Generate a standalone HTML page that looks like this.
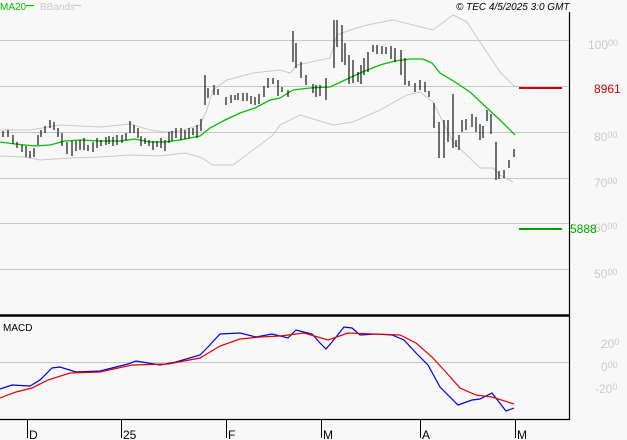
<!DOCTYPE html>
<html><head><meta charset="utf-8"><style>
html,body{margin:0;padding:0;background:#f8f8f8;}
svg{display:block;font-family:"Liberation Sans",sans-serif;}
</style></head><body>
<svg width="627" height="440" viewBox="0 0 627 440" xmlns="http://www.w3.org/2000/svg">
<rect width="627" height="440" fill="#f8f8f8"/>
<g stroke="#c8c8c8" stroke-width="1">
<path d="M0 40.5H569M0 86.5H569M0 132.5H569M0 178.5H569M0 223.5H569M0 269.5H569M0 362.5H569"/>
</g>
<g fill="none" stroke="#c8c8c8" stroke-width="1">
<path d="M0 130 L30 130 L60 125 L100 127 L130 124 L150 130 L165 132 L180 131 L200 125 L207 110 L213 90 L227 80 L253 73 L280 70 L290 73 L297 65 L330 58 L337 35 L350 30 L367 25 L393 20 L433 30 L453 15 L467 22 L480 42 L500 72 L513 85 L517 87"/>
<path d="M0 156 L25 157 L40 160 L70 158 L100 157 L130 155 L160 156 L185 153 L200 157 L213 165 L233 165 L253 150 L273 135 L280 125 L300 115 L333 125 L353 122 L380 110 L407 95 L420 92 L433 102 L453 142 L480 168 L493 168 L500 175 L513 182"/>
</g>
<path fill="none" stroke="#00c000" stroke-width="1.3" d="M0 142 L15 144 L35 146 L50 145 L65 141 L80 140 L100 141 L120 141 L135 139 L150 142 L165 142 L180 140 L200 136 L210 128 L225 120 L240 113 L255 108 L270 100 L280 98 L293 90 L310 88 L330 87 L345 80 L360 73 L380 65 L395 61 L410 59 L423 59 L432 63 L440 73 L455 82 L470 92 L487 108 L500 120 L515 135"/>
<path fill="none" stroke="#000" stroke-width="1.1" d="
M3 131V137M8 130V137M13 135V144M17 142V148M22 145V152M26 146V157M30 151V158M34 148V157M38 135V145M41 130V137M45 126V133M50 120V128M54 122V130M58 128V137M62 133V146M67 142V154M72 141V156M76 141V151M80 140V150M84 138V150M88 145V151M93 142V152M97 138V148M101 140V146M106 137V145M109 136V144M113 137V146M117 135V145M122 135V143M126 133V140M130 121V133M134 125V133M138 128V138M141 136V146M145 138V144M149 140V146M153 141V150M157 141V147M161 138V148M165 140V151M169 132V143M172 131V141M176 128V138M181 128V140M185 130V139M189 128V138M193 128V135M197 125V138M201 119V131M205 75V105M208 88V98M214 85V95M218 89V95M226 97V105M231 95V103M235 95V100M238 93V100M243 93V101M247 93V101M251 96V104M255 97V105M259 94V104M264 86V97M268 78V88M273 78V84M278 80V96M282 87V92M288 90V97M293 31V62M296 43V68M301 62V78M306 75V85M313 84V93M316 85V97M320 85V96M326 78V100M334 20V68M337 20V47M342 25V62M345 43V65M349 55V84M353 60V83M358 72V82M361 65V84M364 58V75M368 52V72M373 45V52M377 45V54M382 46V54M386 47V54M391 46V59M395 48V62M401 50V75M405 58V85M409 81V86M415 83V92M420 80V90M425 82V92M429 91V97M434 103V128M439 122V158M444 120V158M448 120V142M453 94V148M456 140V147M459 135V150M462 120V132M466 119V130M472 114V127M476 117V132M480 124V140M483 126V138M487 110V121M491 114V134M496 142V180M499 171V179M504 170V178M509 160V168M514 149V157"/>
<rect x="519" y="87" width="43" height="2" fill="#d00000"/>
<rect x="519" y="228" width="43" height="2" fill="#00a000"/>
<path d="M569.5 12V420M0 419.5H570" stroke="#000" stroke-width="1.2" fill="none"/>
<path d="M0 315.5H570" stroke="#000" stroke-width="2.5"/>
<path d="M27.5 420V438M121.5 420V438M226.5 420V438M321.5 420V438M420.5 420V438M515.5 420V438" stroke="#000" stroke-width="1"/>
<g font-size="12" fill="#000">
<text x="29" y="439">D</text><text x="123" y="439">25</text><text x="228" y="439">F</text><text x="323" y="439">M</text><text x="422" y="439">A</text><text x="517" y="439">M</text>
</g>
<text x="3" y="331" font-size="10" fill="#000">MACD</text>
<path fill="none" stroke="#0000e0" stroke-width="1.2" d="M0 389 L12 385 L30 386 L40 380 L52 368 L60 367 L76 372 L100 371 L128 364 L136 361 L160 365 L176 362 L200 355 L208 347 L220 334 L240 333 L256 337 L272 334 L288 338 L296 330 L312 334 L320 343 L326 349 L332 342 L344 327 L352 328 L360 335 L376 334 L392 335 L404 340 L416 353 L428 365 L440 387 L458 405 L472 400 L480 399 L492 393 L506 411 L514 408"/>
<path fill="none" stroke="#e00000" stroke-width="1.2" d="M0 398 L16 392 L32 388 L48 380 L70 373 L100 372 L132 365 L168 364 L200 358 L220 346 L240 339 L260 337 L280 336 L304 333 L328 340 L348 333 L400 335 L416 343 L432 357 L444 370 L460 388 L476 395 L492 397 L514 404"/>
<g font-size="12" fill="#c8c8c8">
<text x="588" y="49">100<tspan font-size="9" dy="-3">00</tspan></text>
<text x="594" y="141">80<tspan font-size="9" dy="-3">00</tspan></text>
<text x="594" y="187">70<tspan font-size="9" dy="-3">00</tspan></text>
<text x="594" y="232">60<tspan font-size="9" dy="-3">00</tspan></text>
<text x="594" y="278">50<tspan font-size="9" dy="-3">00</tspan></text>
<text x="601" y="348">20<tspan font-size="9" dy="-3">0</tspan></text>
<text x="601" y="371">0<tspan font-size="9" dy="-3">00</tspan></text>
<text x="595" y="393">-20<tspan font-size="9" dy="-3">0</tspan></text>
</g>
<text x="594" y="93" font-size="12" fill="#d00000">8961</text>
<text x="570" y="233" font-size="12" fill="#00a000">5888</text>
<text x="0" y="10" font-size="10" fill="#00c000">MA20</text>
<path d="M26 5.5H34" stroke="#00c000" stroke-width="1.2"/>
<text x="40" y="10" font-size="10" fill="#c8c8c8">BBands</text>
<path d="M73 5.5H81" stroke="#c8c8c8" stroke-width="1.2"/>
<text x="456" y="10" font-size="10" font-style="italic" fill="#000">© TEC 4/5/2025 3:0 GMT</text>
</svg>
</body></html>
